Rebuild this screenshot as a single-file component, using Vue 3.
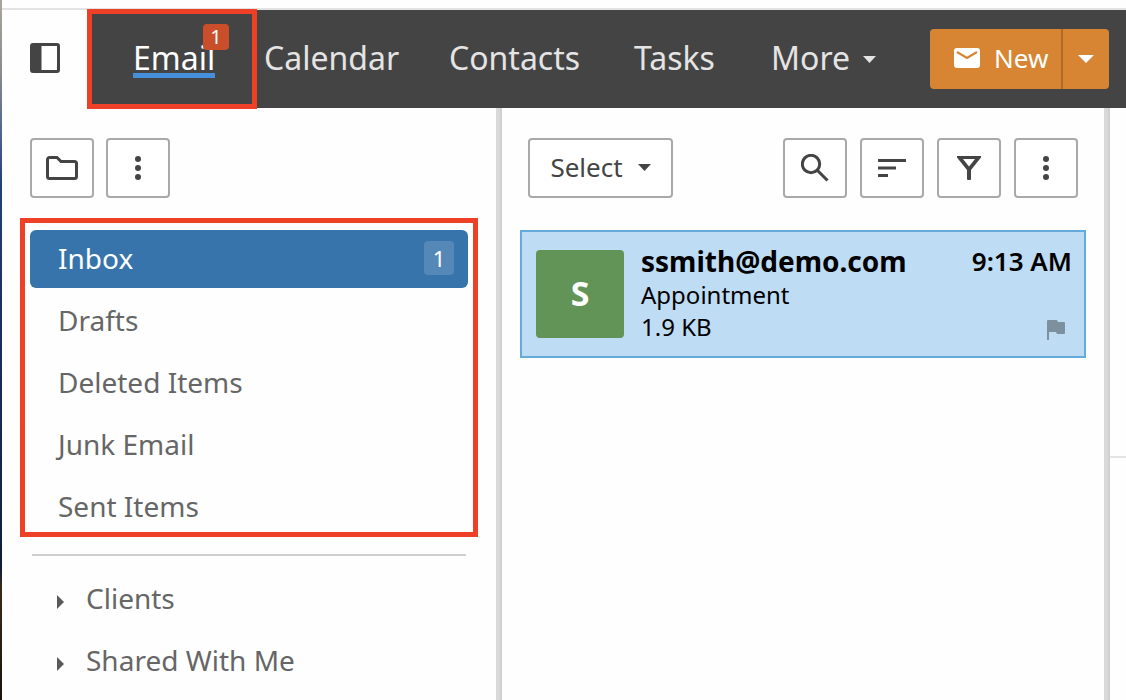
<script setup>
const tabs = [
  { name: 'Email', badge: 1, active: true },
  { name: 'Calendar' },
  { name: 'Contacts' },
  { name: 'Tasks' },
]
const folders = [
  { name: 'Inbox', count: 1, active: true },
  { name: 'Drafts' },
  { name: 'Deleted Items' },
  { name: 'Junk Email' },
  { name: 'Sent Items' },
]
const groups = ['Clients', 'Shared With Me']
</script>

<template>
  <div class="app">
    <div class="desktop-edge"></div>
    <div class="client">
      <header class="topbar">
        <button class="panel-toggle" aria-label="Toggle sidebar">
          <svg width="30" height="30" viewBox="0 0 30 30">
            <path fill="#444" fill-rule="evenodd" d="M3 0h24a3 3 0 0 1 3 3v24a3 3 0 0 1-3 3H3a3 3 0 0 1-3-3V3a3 3 0 0 1 3-3zM11.500 3v24H27V3z" />
          </svg>
        </button>
        <div class="bar">
          <nav class="tabs">
            <a v-for="t in tabs" :key="t.name" href="#" class="tab" :class="{ active: t.active }">
              <span class="tab-label">{{ t.name }}</span>
              <span v-if="t.badge" class="badge">{{ t.badge }}</span>
            </a>
            <button class="tab more">
              <span class="tab-label">More</span>
              <svg width="13" height="7" viewBox="0 0 13 7"><path fill="currentColor" d="M0 0h13L6.500 7z" /></svg>
            </button>
          </nav>
          <div class="new-group">
            <button class="new-main">
              <svg width="26" height="20" viewBox="0 0 26 20">
                <rect width="26" height="20" rx="3" fill="#fff" />
                <path d="M3 4l10 6 10-6" fill="none" stroke="#d78532" stroke-width="2.200" />
              </svg>
              New
            </button>
            <button class="new-drop" aria-label="More new items">
              <svg width="16" height="8" viewBox="0 0 16 8"><path fill="#fff" d="M0 0h16L8 8z" /></svg>
            </button>
          </div>
          <div class="highlight tab-highlight"></div>
        </div>
      </header>

      <main class="panes">
        <aside class="sidebar">
          <div class="toolbar">
            <button class="tool" aria-label="Folders">
              <svg width="32" height="24" viewBox="0 0 32 24">
                <path d="M3.500 1.500h7.500l4 4h13.500a2 2 0 0 1 2 2v13a2 2 0 0 1-2 2h-25a2 2 0 0 1-2-2v-17a2 2 0 0 1 2-2z" fill="none" stroke="#444" stroke-width="3" />
              </svg>
            </button>
            <button class="tool" aria-label="Folder options">
              <svg width="6" height="24" viewBox="0 0 6 24" fill="#444">
                <circle cx="3" cy="3" r="3" /><circle cx="3" cy="12" r="3" /><circle cx="3" cy="21" r="3" />
              </svg>
            </button>
          </div>
          <div class="folders">
            <a v-for="f in folders" :key="f.name" href="#" class="folder" :class="{ active: f.active }">
              <span>{{ f.name }}</span>
              <span v-if="f.count" class="count">{{ f.count }}</span>
            </a>
            <div class="highlight folder-highlight"></div>
          </div>
          <hr class="divider" />
          <a v-for="g in groups" :key="g" href="#" class="folder group">
            <svg width="7" height="14" viewBox="0 0 7 14"><path fill="#5a5a5a" d="M0 0l7 7-7 7z" /></svg>
            <span>{{ g }}</span>
          </a>
        </aside>
        <div class="splitter"></div>

        <section class="list">
          <div class="toolbar list-toolbar">
            <button class="tool select">
              Select
              <svg width="13" height="7" viewBox="0 0 13 7"><path fill="#444" d="M0 0h13L6.500 7z" /></svg>
            </button>
            <button class="tool" aria-label="Search">
              <svg width="28" height="28" viewBox="0 0 28 28" fill="none" stroke="#444" stroke-width="3">
                <circle cx="10" cy="10" r="8.700" /><path d="M16.500 16.500L26.500 26.500" />
              </svg>
            </button>
            <button class="tool" aria-label="Sort">
              <svg width="28" height="20" viewBox="0 0 28 20" fill="#444">
                <path d="M0 1h28v3H0zM0 8.500h18v3H0zM0 16h10v3H0z" />
              </svg>
            </button>
            <button class="tool" aria-label="Filter">
              <svg width="24" height="24" viewBox="0 0 24 24">
                <path fill="#444" fill-rule="evenodd" d="M0 0h24v1.500L14 14v9a1 1 0 0 1-1 1h-2a1 1 0 0 1-1-1v-9L0 1.500zM6 3l6 7.500L18 3z" />
              </svg>
            </button>
            <button class="tool" aria-label="List options">
              <svg width="6" height="24" viewBox="0 0 6 24" fill="#444">
                <circle cx="3" cy="3" r="3" /><circle cx="3" cy="12" r="3" /><circle cx="3" cy="21" r="3" />
              </svg>
            </button>
          </div>
          <article class="message">
            <div class="avatar">S</div>
            <div class="body">
              <div class="line first"><strong class="sender">ssmith@demo.com</strong><time class="time">9:13 AM</time></div>
              <div class="line">Appointment</div>
              <div class="line last">
                <span>1.9 KB</span>
                <button class="flag" aria-label="Flag message">
                  <svg width="18" height="20" viewBox="0 0 18 20"><path fill="#7c909f" d="M1 0h9l1 2h6a1 1 0 0 1 1 1v10a1 1 0 0 1-1 1h-7l-1-2H2v8H0V1a1 1 0 0 1 1-1z" /></svg>
                </button>
              </div>
            </div>
          </article>
        </section>
        <div class="splitter"></div>
        <section class="reader"><div class="reader-head"></div></section>
      </main>
    </div>
  </div>
</template>

<style>
html, body { background: #fefefe; }
</style>

<style scoped>
* { box-sizing: border-box; }
.app {
  display: flex;
  min-height: 100vh;
  font-family: "Noto Sans", "Open Sans", sans-serif;
  color: #444;
}
button { font: inherit; color: inherit; margin: 0; padding: 0; border: 0; background: none; cursor: pointer; }
a { color: inherit; text-decoration: none; }
svg { display: block; flex: none; }
.desktop-edge {
  flex: 0 0 2px;
  background: linear-gradient(#aaa59c 0%, #8c8c8c 10%, #5d6e92 17%, #24417a 26%, #192f62 45%, #132448 72%, #0e1c3a 81%, #3b2a18 84%, #1c120a 100%);
}
.client { flex: 1; min-width: 0; display: flex; flex-direction: column; padding-top: 8px; }
.topbar { display: flex; border-top: 2px solid #e2e2e2; }
.panel-toggle { flex: 0 0 86px; display: flex; align-items: center; justify-content: center; padding-bottom: 2px; }
.bar {
  position: relative;
  flex: 1;
  display: flex;
  align-items: center;
  height: 98px;
  padding: 0 17px 0 45px;
  background: #444;
}
.tabs { flex: 1; display: grid; grid-template-columns: 131fr 185fr 185fr 137fr 159fr; }
.tab { position: relative; display: flex; align-items: center; font-size: 32px; line-height: 36px; color: #e4e4e4; }
.tab.active { color: #fff; }
.tab-label { height: 38px; }
.tab.active .tab-label { border-bottom: 5px solid #458fdb; }
.more { gap: 13px; }
.badge {
  position: absolute;
  left: 70px;
  top: -16px;
  width: 26px;
  height: 26px;
  border-radius: 4px;
  background: #c94e29;
  color: #fff;
  font-size: 20px;
  line-height: 26px;
  text-align: center;
}
.highlight { position: absolute; border: 5px solid #ee4026; pointer-events: none; }
.tab-highlight { left: -1px; top: -1px; bottom: -1px; width: 170px; }
.new-group { display: flex; height: 60px; border-radius: 4px; background: #d78532; overflow: hidden; color: #fff; font-size: 26px; }
.new-main { display: flex; align-items: center; gap: 14px; width: 131px; padding: 0 0 2px 24px; }
.new-drop { width: 48px; display: flex; align-items: center; justify-content: center; border-left: 2px solid #af6a26; }

.panes { flex: 1; display: grid; grid-template-columns: 494fr 6px 602fr 6px 16fr; }
.splitter { background: #d9d9d9; border-right: 2px solid #d0d0d0; }
.sidebar { min-width: 0; padding: 30px 28px 0; }
.toolbar { display: flex; gap: 12px; }
.tool {
  display: flex;
  align-items: center;
  justify-content: center;
  width: 64px;
  height: 60px;
  border: 2px solid #a9a9a9;
  border-radius: 4px;
  background: #fff;
}
.folders { position: relative; display: grid; gap: 4px; margin-top: 32px; }
.folder {
  display: flex;
  align-items: center;
  height: 58px;
  padding: 0 14px 2px 28px;
  border-radius: 6px;
  font-size: 28px;
  color: #666;
}
.folder.active { justify-content: space-between; background: #3874ac; color: #fff; }
.count { width: 30px; height: 34px; border-radius: 4px; background: #5688b7; font-size: 22px; line-height: 34px; text-align: center; }
.folder-highlight { inset: -12px -10px -1px; }
.divider { height: 2px; margin: 18px 2px 14px; border: 0; background: #cfcfcf; }
.group { gap: 22px; margin-bottom: 4px; padding-left: 27px; }
.group svg { margin-top: 8px; }

.list { min-width: 0; padding: 30px 18px 0; }
.list-toolbar { gap: 13px; padding: 0 8px; }
.select { width: 145px; gap: 15px; margin-right: auto; padding-bottom: 2px; font-size: 26px; }
.message {
  display: flex;
  gap: 17px;
  margin-top: 32px;
  padding: 11px 12px 13px 14px;
  border: 2px solid #64abdc;
  background: #bedcf4;
  color: #000;
}
.avatar {
  flex: none;
  width: 88px;
  height: 88px;
  margin: 7px 0 5px;
  border-radius: 4px;
  background: #629458;
  color: #fff;
  font-size: 34px;
  font-weight: 700;
  line-height: 86px;
  text-align: center;
}
.body { flex: 1; min-width: 0; font-size: 24px; }
.line { display: flex; justify-content: space-between; align-items: center; height: 32px; line-height: 32px; }
.first { height: 36px; }
.sender { font-size: 28px; }
.time { font-size: 26px; font-weight: 600; }
.flag { margin: 6px 7px 0 0; }
.reader-head { height: 350px; border-bottom: 2px solid #e4e4e4; }
</style>
